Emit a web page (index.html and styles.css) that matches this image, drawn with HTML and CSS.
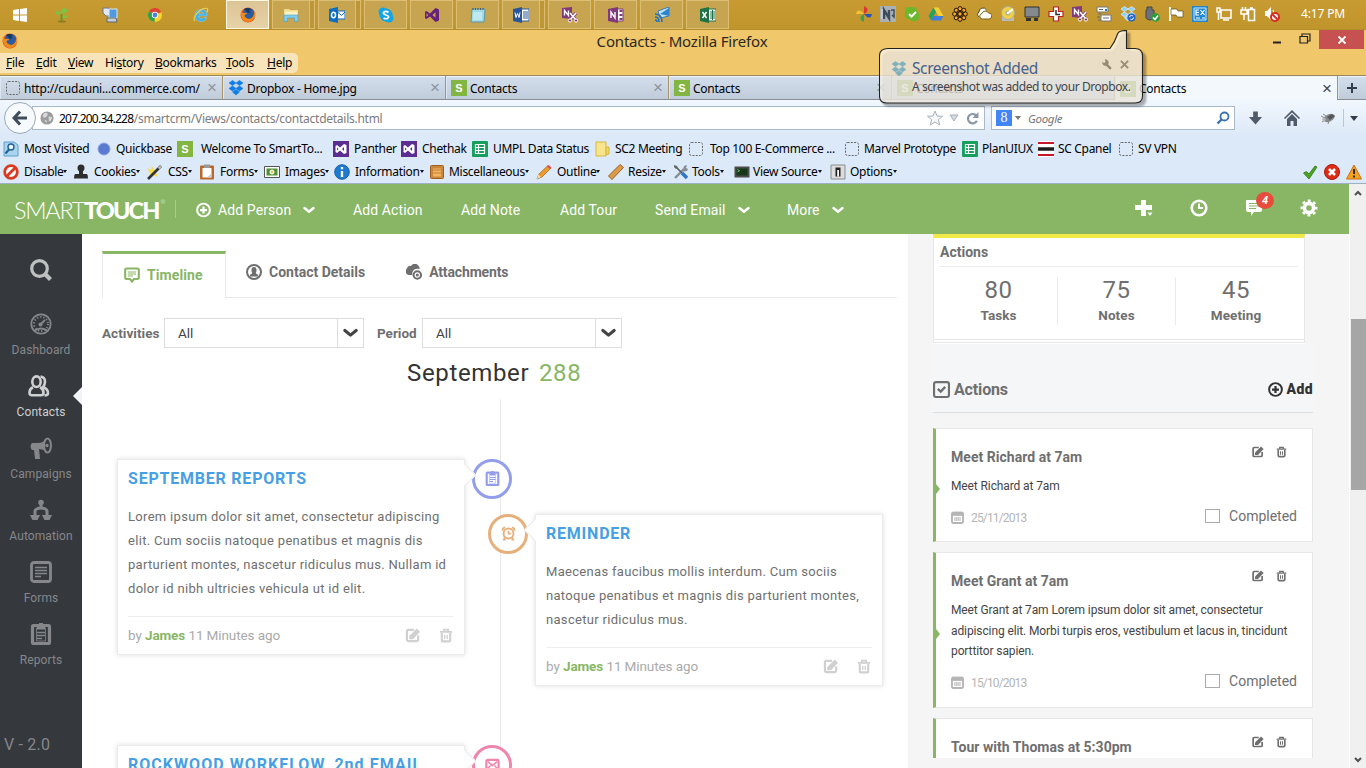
FILE: index.html
```
<!DOCTYPE html>
<html lang="en">
<head>
<meta charset="utf-8">
<title>Contacts - Mozilla Firefox</title>
<link rel="stylesheet" href="styles.css">
</head>
<body>
<svg class="sprite" aria-hidden="true">
<defs>
<symbol id="firefox" viewBox="0 0 16 16"><circle cx="8" cy="8" r="7.500" fill="#d9531e"/><circle cx="8.500" cy="6.500" r="5.500" fill="#2b5c9e"/><path d="M4 2q3-2 7 0l-2 2 2 1-3 1z" fill="#16395f"/><path d="M1 3Q0 9 3 13q5 4 10 0 3-4 1.500-8-1 6-5 7-5-1-5-4 1-1 3-1Q6 5 3 6 1 5 1 3z" fill="#f08a1d"/><path d="M14 4q2 4 0 8 2-2 1.500-5z" fill="#f8d24a"/></symbol>
<symbol id="win" viewBox="0 0 16 16"><path fill="#fff" d="M1 3l6-.9v5.400H1zM8 2l7-1v6.500H8zM1 8.500h6v5.400L1 13zM8 8.500h7V15l-7-1z"/></symbol>
<symbol id="plant" viewBox="0 0 16 16"><ellipse cx="8" cy="14.500" rx="4" ry="1" fill="#8a7a20"/><path d="M7.500 14q0-4 0-7" stroke="#5b9a2a" stroke-width="1.800" fill="none"/><path d="M7 7Q3 9 1 6q0-3 4-2 0 0 2 3zM7 6Q7 1 11 1q3 1 2 4-3 3-6 1zM8 10q4 3 6-1-3-2-6 1z" fill="#7fc241"/></symbol>
<symbol id="pcs" viewBox="0 0 16 16"><path d="M1 1h6l2 4-2 4H4L1 6z" fill="#dfe8f2" stroke="#6a7890"/><path d="M7 2h8v9H7z" fill="#4f9be0" stroke="#dfe6ee"/><path d="M5 11h9l1 4H5z" fill="#c9ced6" stroke="#5d6675"/></symbol>
<symbol id="chrome" viewBox="0 0 16 16"><circle cx="8" cy="8" r="7" fill="#fbd22a"/><path d="M8 8L2 4.300A7 7 0 0 1 14.300 5z" fill="#dd4436"/><path d="M8 8L2 4.300A7 7 0 0 0 7.500 15z" fill="#2ea04e"/><circle cx="8" cy="8" r="3.200" fill="#fff"/><circle cx="8" cy="8" r="2.400" fill="#4a82dd"/></symbol>
<symbol id="ie" viewBox="0 0 16 16"><path d="M14 9H5.500q.5 2.700 3 2.700 1.500 0 2.200-1.200h3q-1.500 4.200-5.500 4.200Q2 14 2 8.500t6.200-6.200Q14 2.500 14 9zM5.600 7h5q-.3-2.200-2.500-2.200T5.600 7z" fill="#3fb2ef" stroke="#8fd3f5" stroke-width=".5"/><path d="M14 1.500q-3-1-7 2T1.500 10q-1 3 .5 4M14 1.500q1.500.5 0 4" stroke="#e9cf58" stroke-width="1.200" fill="none"/></symbol>
<symbol id="folder" viewBox="0 0 16 16"><path d="M1 2h5l1 1h8v6H1z" fill="#f2dc8b"/><path d="M2 4.500h12V8H2z" fill="#fff4c2"/><path d="M1 8h14v6.500h-3.500V11h-7v3.500H1z" fill="#83cdec" stroke="#4d9cc4" stroke-width=".6"/></symbol>
<symbol id="outlook" viewBox="0 0 16 16"><path d="M8 4h8v8H8z" fill="#fff" stroke="#0a6ec4"/><path d="M8 4.500l4.500 4L16 5" stroke="#0a6ec4" fill="none"/><path d="M0 2l9-2v16l-9-2z" fill="#0a6ec4"/><ellipse cx="4.500" cy="8" rx="2" ry="2.700" stroke="#fff" stroke-width="1.500" fill="none"/></symbol>
<symbol id="skype" viewBox="0 0 16 16"><circle cx="5" cy="5" r="4.500" fill="#12a5e6"/><circle cx="11" cy="11" r="4.500" fill="#12a5e6"/><circle cx="8" cy="8" r="6.500" fill="#12a5e6"/><path d="M10.500 5.500Q8 3.500 6 5t2 3 2 3-4.500 0" stroke="#fff" stroke-width="1.700" fill="none"/></symbol>
<symbol id="vs" viewBox="0 0 16 16"><path d="M11.500 1L15 2.500v11L11.500 15 6 9.500 2.500 12 1 11.200V4.800L2.500 4 6 6.500zM11.500 5.300L8.500 8l3 2.700zM2.500 6.200v3.600L4.300 8z" fill="#68217a"/></symbol>
<symbol id="vsbox" viewBox="0 0 16 16"><path d="M0 0h16v16H0z" fill="#5c2d91"/><path d="M11 3l2.500 1v8L11 13 7 9.500 4 12l-1.500-1V5L4 4l3 2.500zM11 6L9 8l2 2zM4 6.500v3L5.600 8z" fill="#fff"/></symbol>
<symbol id="notepad" viewBox="0 0 16 16"><path d="M2 2h13l-1 13H1z" fill="#9fdbe6" stroke="#5e97a6"/><path d="M3 1v2M5.500 1v2M8 1v2M10.500 1v2M13 1v2" stroke="#556"/><path d="M3 6h9M3 8h9M3 10h9M3 12h9" stroke="#dff5fa"/></symbol>
<symbol id="word" viewBox="0 0 16 16"><path d="M8 2h8v12H8z" fill="#fff" stroke="#2a5699"/><path d="M10 5h5M10 7h5M10 9h5M10 11h5" stroke="#2a5699"/><path d="M0 2l9-2v16l-9-2z" fill="#2a5699"/><path d="M2 5.500l1 5 1.500-4 1.500 4 1-5" stroke="#fff" fill="none"/></symbol>
<symbol id="clip" viewBox="0 0 16 16"><path d="M0 1l10-1v12l-10-1z" fill="#80397b"/><path d="M2.500 8.500V3.500l4 5v-5" stroke="#fff" stroke-width="1.400" fill="none"/><path d="M8 6l6 7M14 6l-6 7" stroke="#80397b" stroke-width="3"/><path d="M8 6l6 7M14 6l-6 7" stroke="#fff" stroke-width="1.600"/><circle cx="8" cy="13.500" r="1.600" fill="#80397b" stroke="#fff"/><circle cx="14" cy="13.500" r="1.600" fill="#80397b" stroke="#fff"/></symbol>
<symbol id="onenote" viewBox="0 0 16 16"><path d="M8 2h7v12H8z" fill="#fff" stroke="#80397b"/><path d="M13 3v2M13 7v2M13 11v2" stroke="#80397b" stroke-width="3"/><path d="M0 2l10-2v16l-10-2z" fill="#80397b"/><path d="M3 11V5l4 6V5" stroke="#fff" stroke-width="1.400" fill="none"/></symbol>
<symbol id="dish" viewBox="0 0 16 16"><path d="M4 4l11-4v9L6 11z" fill="#c6e5f7" stroke="#3b7cb2"/><path d="M6 7l9-6v8z" fill="#2d86d0"/><path d="M1 7q7 0 7 8M1 10q4 0 4 5M1 13q2 0 2 2" stroke="#2474bd" stroke-width="1.700" fill="none"/></symbol>
<symbol id="excel" viewBox="0 0 16 16"><path d="M8 2h8v12H8z" fill="#fff" stroke="#1f7245"/><path d="M10 5h5M10 7h5M10 9h5M10 11h5M12.500 3v10" stroke="#1f7245"/><path d="M0 2l9-2v16l-9-2z" fill="#1f7245"/><path d="M2.500 5l4 6M6.500 5l-4 6" stroke="#fff" stroke-width="1.500"/></symbol>
<symbol id="pinwheel" viewBox="0 0 16 16"><path d="M8 8V0q5 2 3 6z" fill="#da3b32"/><path d="M8 8h8q-1 5-5 3z" fill="#2f54b8"/><path d="M8 8v8q-5-2-3-6z" fill="#35a34d"/><path d="M8 8H0q1-5 5-3z" fill="#f1c232"/></symbol>
<symbol id="nbox" viewBox="0 0 16 16"><path d="M0 0h16v16H0z" fill="#aab0b5"/><path d="M4 13V4l5 8V4" stroke="#3e4c5c" stroke-width="2.400" fill="none"/><path d="M11 4h3v7l-2-2" stroke="#3e4c5c" stroke-width="1.500" fill="none"/><path d="M2 13V3" stroke="#e7eaee"/></symbol>
<symbol id="lync" viewBox="0 0 16 16"><rect x="1" y="1" width="12" height="12" rx="4" fill="#6bb82d"/><rect x="5" y="5" width="10" height="10" rx="4" fill="#6bb82d"/><path d="M5 8l2.500 2.500L12 6" stroke="#fff" stroke-width="2" fill="none"/></symbol>
<symbol id="drive" viewBox="0 0 16 16"><path d="M5.500 1.500h5l5 8.500h-5z" fill="#f8cf38"/><path d="M5.500 1.500L8 6 3 14.500.5 10z" fill="#2aa25f"/><path d="M5.500 10h10L13 14.500H3z" fill="#3f7de0"/></symbol>
<symbol id="flower" viewBox="0 0 16 16"><g fill="#f6a623" stroke="#1e1608"><circle cx="8" cy="2.700" r="2.100"/><circle cx="8" cy="13.300" r="2.100"/><circle cx="2.700" cy="8" r="2.100"/><circle cx="13.300" cy="8" r="2.100"/><circle cx="4.200" cy="4.200" r="2"/><circle cx="11.800" cy="4.200" r="2"/><circle cx="4.200" cy="11.800" r="2"/><circle cx="11.800" cy="11.800" r="2"/></g><circle cx="8" cy="8" r="3" fill="#201808"/><circle cx="8" cy="8" r="1.700" fill="#f6a623"/></symbol>
<symbol id="cloud" viewBox="0 0 16 16"><path d="M3 11a3 3 0 0 1 0-5 4 4 0 0 1 7.500-2" fill="#fff" stroke="#5a4a18"/><path d="M6 13a2.800 2.800 0 0 1 0-5.500A3.500 3.500 0 0 1 12.500 7 3 3 0 0 1 13 13z" fill="#fff" stroke="#7a651c"/></symbol>
<symbol id="disc" viewBox="0 0 16 16"><path d="M2 10h12v5H2z" fill="#b8bcc1"/><circle cx="8" cy="7" r="6.500" fill="#f0d247" stroke="#aaa"/><circle cx="8" cy="7" r="2" fill="#fff" stroke="#999"/><path d="M8 7l5-4" stroke="#fff" stroke-width="2"/></symbol>
<symbol id="screen" viewBox="0 0 16 16"><path d="M1 1h14v10H1z" fill="#85898e" stroke="#333"/><path d="M2 12h5v3H2zM10 12h4v3h-4z" fill="#333"/></symbol>
<symbol id="redcross" viewBox="0 0 16 16"><path d="M5.500 1h5v4.500H15v5h-4.500V15h-5v-4.500H1v-5h4.500z" fill="#fff" stroke="#b82222" stroke-width="1.200"/><path d="M8 4v4.500h4" stroke="#333" stroke-width="1.500" fill="none"/></symbol>
<symbol id="cards" viewBox="0 0 16 16"><path d="M1 1h11v5H1zM5 9h10v6H5z" fill="#fff" stroke="#777"/><path d="M2 8h3M1 11h3M2 14h3M7 12h6M3 3.500h4" stroke="#667"/><path d="M9 3h2v2H9z" fill="#27b"/></symbol>
<symbol id="dropbox" viewBox="0 0 16 16"><path d="M4.500.5L8 3 4.500 5.500 1 3zM11.500.5L15 3l-3.500 2.500L8 3zM4.500 5.900L8 8.400l-3.500 2.500L1 8.400zM11.500 5.900L15 8.400l-3.500 2.500L8 8.400zM4.500 12L8 9.500l3.500 2.500L8 15z" fill="currentColor" stroke="currentColor" stroke-width=".6"/></symbol>
<symbol id="dropsync" viewBox="0 0 16 16"><path d="M4.500.5L8 3 4.500 5.500 1 3zM11.500.5L15 3l-3.500 2.500L8 3zM4.500 5.900L8 8.400l-3.500 2.500L1 8.400zM11.500 5.900L15 8.400l-3.500 2.500L8 8.400zM4.500 12L8 9.500l3.500 2.500L8 15z" fill="#8fd0f6" stroke="#d8effb" stroke-width=".8"/><circle cx="11.500" cy="11.500" r="4" fill="#2667c9"/><circle cx="11.500" cy="11.500" r="2" fill="none" stroke="#fff" stroke-dasharray="4 2"/></symbol>
<symbol id="usb" viewBox="0 0 16 16"><path d="M3 1h5v3h2v8q-4 4-8 0V4h1z" fill="#6c7177" stroke="#43474b"/><circle cx="11.500" cy="11.500" r="4.300" fill="#2d9b3a"/><path d="M9 11.500l2 2 3-4" stroke="#fff" stroke-width="1.500" fill="none"/></symbol>
<symbol id="flag" viewBox="0 0 16 16"><path d="M2 1v14" stroke="#fff" stroke-width="2"/><path d="M3 3h6l1 2h5v6H9L8 9H3z" fill="#fff" stroke="#5c4a12" stroke-width=".7"/></symbol>
<symbol id="ex" viewBox="0 0 16 16"><path d="M0 0h16v16H0z" fill="#1f87cf"/><path d="M2 2h12v12H2z" fill="none" stroke="#fff" stroke-width=".8"/><path d="M7 4H4v5h3M4 6.500h3M8.500 4l4 5M12.500 4l-4 5M4 12h4M10 12h3" stroke="#fff" stroke-width="1.200" fill="none"/></symbol>
<symbol id="net" viewBox="0 0 16 16"><path d="M5 4h10v8H5zM7 14h6M1 2h3v4H1zM2.500 6v8" fill="none" stroke="#fff" stroke-width="1.500"/></symbol>
<symbol id="batt" viewBox="0 0 16 16"><path d="M8.500 3.500h6v11h-6zM10 2h3M1 4h6v4H1zM2.500 1v3M5.500 1v3M4 8v6" fill="none" stroke="#fff" stroke-width="1.500"/></symbol>
<symbol id="mute" viewBox="0 0 16 16"><path d="M1 5h2l4-4v13l-4-4H1z" fill="#fff"/><path d="M9 4q2 3 0 7" stroke="#fff" fill="none"/><circle cx="11" cy="11" r="4" fill="#fff" stroke="#d82b22" stroke-width="2"/><path d="M8.500 8.500l5 5" stroke="#d82b22" stroke-width="2"/></symbol>
<symbol id="dash" viewBox="0 0 16 16"><rect x="1.500" y="1.500" width="13" height="13" rx="2" fill="none" stroke="#666" stroke-dasharray="2 1.300"/></symbol>
<symbol id="magblue" viewBox="0 0 16 16"><path d="M1 1h10l4 3v11H1z" fill="#a9d4ee" stroke="#5da0cf"/><circle cx="8" cy="6" r="3" fill="#eaf6fd" stroke="#245f93" stroke-width="1.400"/><path d="M6 8.500l-3.500 4" stroke="#245f93" stroke-width="2"/></symbol>
<symbol id="ball" viewBox="0 0 16 16"><circle cx="8" cy="8" r="6" fill="#5a7ad0" stroke="#8aa4e8"/></symbol>
<symbol id="sheet" viewBox="0 0 16 16"><rect width="16" height="16" rx="1" fill="#17a05d"/><path d="M3.500 3.500h9v9h-9zM3.500 6.500h9M3.500 9.500h9M6.500 3.500v9" fill="none" stroke="#fff" stroke-width="1.200"/></symbol>
<symbol id="yfold" viewBox="0 0 16 16"><path d="M2 1h10v14H2z" fill="#f7e48d" stroke="#d9b93c"/><path d="M12 6h3v7l-3 1z" fill="#eed26a" stroke="#d9b93c"/></symbol>
<symbol id="cpanel" viewBox="0 0 16 16"><path d="M0 0h16v16H0z" fill="#fff"/><path d="M0 2h16M0 14h16" stroke="#c41a2b" stroke-width="2"/><path d="M0 8h16" stroke="#1d1d1d" stroke-width="3.500"/></symbol>
<symbol id="no" viewBox="0 0 16 16"><circle cx="8" cy="8" r="6.300" fill="#fff" stroke="#dc3a20" stroke-width="2.800"/><path d="M4 12l8-8" stroke="#dc3a20" stroke-width="2.800"/></symbol>
<symbol id="stamp" viewBox="0 0 16 16"><circle cx="8" cy="4" r="3.500" fill="#2e2e2e"/><path d="M6 6h4v4h4q1 1 1 4.500H1Q1 11 2 10h4z" fill="#2e2e2e"/></symbol>
<symbol id="wand" viewBox="0 0 16 16"><path d="M0 4l4 2 1-4 2 4 5-1-3 4 2 4-5-2-4 3 1-5z" fill="#f7d94c"/><path d="M1 15L14 2" stroke="#333" stroke-width="2.600"/><path d="M11.500 4.500L14 2" stroke="#bbb" stroke-width="2.400"/></symbol>
<symbol id="pad" viewBox="0 0 16 16"><rect x="1" y="1.500" width="14" height="14" rx="1" fill="#b9682a"/><path d="M3.500 4h9v9.500h-9z" fill="#fff"/><path d="M5 .5h6v3.500H5z" fill="#999"/><path d="M8 13.500l4.500-4v4z" fill="#ccc"/></symbol>
<symbol id="image" viewBox="0 0 16 16"><path d="M.5 2.500h15v11H.5z" fill="#fff" stroke="#555"/><path d="M2.500 4.500h11v7h-11z" fill="#4f8f35"/><circle cx="8" cy="8" r="2.500" fill="#e9eee0"/><circle cx="8" cy="8" r="1" fill="#e8c324"/></symbol>
<symbol id="info" viewBox="0 0 16 16"><circle cx="8" cy="8" r="7.300" fill="#1d7bd0" stroke="#1a5fa0"/><path d="M8 7v6M8 3v2.300" stroke="#fff" stroke-width="2.300"/></symbol>
<symbol id="box" viewBox="0 0 16 16"><rect x="1.500" y="1.500" width="13" height="13" rx="1" fill="#c9873c" stroke="#a35d1c"/><path d="M4 4.500h8v8H4z" fill="#efb561"/><path d="M4 6h8M4 9h8" stroke="#a35d1c" stroke-width=".6"/></symbol>
<symbol id="pencil" viewBox="0 0 16 16"><path d="M1 15l2-5L12 1.500l3 2.500L6 13z" fill="#f09a2b" stroke="#9c5d17" stroke-width=".7"/><path d="M1 15l1.500-4.500L5 13z" fill="#f3ddb4"/><path d="M11 2.500l1.500-1.500L15.500 3.500 14 5z" fill="#d94a59"/></symbol>
<symbol id="ruler" viewBox="0 0 16 16"><path d="M.5 12L12 .5l3.500 3L4 15.500z" fill="#dd9a4a" stroke="#9a6326"/></symbol>
<symbol id="tools" viewBox="0 0 16 16"><path d="M2 14l9-9" stroke="#868c94" stroke-width="2.400"/><path d="M10 6l1-4 3-1-1 3 2 1-1 2-3 .5z" fill="#868c94"/><path d="M3 3l6 6" stroke="#555c66" stroke-width="1.600"/><path d="M1 1l3 1 1 2-2 1-2-2z" fill="#666"/><path d="M9 9l5 5" stroke="#2f75c8" stroke-width="3.500"/></symbol>
<symbol id="term" viewBox="0 0 16 16"><rect x=".5" y="2.500" width="15" height="11" rx="1" fill="#4a4d50" stroke="#999"/><path d="M2.500 4.500h11v7h-11z" fill="#173818"/><path d="M3.500 5.500l2 1.200-2 1.200" stroke="#6fc76f" fill="none"/></symbol>
<symbol id="opt" viewBox="0 0 16 16"><path d="M1 1h14v14H1z" fill="#dcdcdc" stroke="#8b8b8b"/><path d="M5.500 3.500h5v9h-5z" fill="#222"/><path d="M7.200 6h1.800v6.500H7.200z" fill="#fff"/></symbol>
<symbol id="check" viewBox="0 0 16 16"><path d="M1.500 9l3-1.500L7 10l6-8 2 1-8 12z" fill="#4ca522" stroke="#2d7310" stroke-width=".8"/></symbol>
<symbol id="err" viewBox="0 0 16 16"><circle cx="8" cy="8" r="7.500" fill="#de2b17" stroke="#ad1a0c"/><path d="M5 5l6 6M11 5l-6 6" stroke="#fff" stroke-width="2.500"/></symbol>
<symbol id="warn" viewBox="0 0 16 16"><path d="M8 1l7.500 14H.5z" fill="#f6a21d" stroke="#c9700c"/><path d="M8 5v5M8 11.500v2" stroke="#222" stroke-width="1.900"/></symbol>
<symbol id="magx" viewBox="0 0 22 22"><circle cx="9.500" cy="9.500" r="7.800" fill="none" stroke="currentColor" stroke-width="3.200"/><path d="M15 15l5.500 5.500" stroke="currentColor" stroke-width="4.200"/></symbol>
<symbol id="gauge" viewBox="0 0 22 22"><circle cx="11" cy="11" r="9.700" fill="none" stroke="currentColor" stroke-width="1.800"/><circle cx="11" cy="11" r="7" fill="none" stroke="currentColor" stroke-width="2" stroke-dasharray="1.200 2"/><path d="M10 12l5-5M4 18q7-5 14 0" stroke="currentColor" stroke-width="1.800" fill="none"/><circle cx="10.500" cy="11.500" r="2" fill="currentColor"/></symbol>
<symbol id="people" viewBox="0 0 22 22"><g fill="none" stroke="currentColor" stroke-width="2.600"><ellipse cx="8.500" cy="6.700" rx="4.200" ry="5.300"/><path d="M5 12.300q-3.500 1.500-3.500 5.500 0 2.500 2.500 2.500h9q2.500 0 2.500-2.500 0-4-3.500-5.500M12.500 1.500q4.500.5 4.500 5.200 0 3-2 5.300 5 2 5 6 0 2.500-3.500 2.500"/></g></symbol>
<symbol id="horn" viewBox="0 0 22 22"><path d="M2 6h6q5 0 9-4.500v13.500q-4-3-8-3L10 22H5l-1-9H2Q-1 9.500 2 6z" fill="currentColor"/><ellipse cx="17.500" cy="8.500" rx="3.500" ry="7" fill="#35383d" stroke="currentColor" stroke-width="2"/><circle cx="17" cy="8.500" r="1.700" fill="currentColor"/></symbol>
<symbol id="tree" viewBox="0 0 22 22"><path d="M11 3v6M11 9q-5 0-6 3v5M11 9q5 0 6 3v5" fill="none" stroke="currentColor" stroke-width="3"/><circle cx="11" cy="3.500" r="2.800" fill="currentColor"/><path d="M0 16h10l-2.500 5h-5zM12 16h10l-2.500 5h-5z" fill="currentColor"/></symbol>
<symbol id="form" viewBox="0 0 22 22"><rect x="1.500" y="1.500" width="19" height="19" rx="2.500" fill="none" stroke="currentColor" stroke-width="2.800"/><path d="M5 6.500h12M5 9.500h12M5 12.500h12M5 15.500h6" stroke="currentColor" stroke-width="1.600"/></symbol>
<symbol id="report" viewBox="0 0 22 22"><rect x="2.500" y="2.500" width="17" height="18" rx="1" fill="none" stroke="currentColor" stroke-width="3.200"/><path d="M6.500 5h9v13h-9z" fill="none" stroke="currentColor" stroke-width=".8"/><path d="M7 3h8v3.500H7zM9 0h4v3H9z" fill="currentColor"/><path d="M7 9.500h8M7 12.500h8M7 15.500h5" stroke="currentColor" stroke-width="1.600"/></symbol>
<symbol id="edit" viewBox="0 0 16 16"><path d="M9 2H3Q1.500 2 1.500 3.500v9Q1.500 14 3 14h9q1.500 0 1.500-1.500V8" fill="none" stroke="currentColor" stroke-width="2.300"/><path d="M4 8.500L12 .500l3.500 3.500L8 12H4z" fill="currentColor"/></symbol>
<symbol id="trash" viewBox="0 0 16 16"><path d="M1 3.900h14M5.500 3.500V1.300h5v2.200" fill="none" stroke="currentColor" stroke-width="2"/><path d="M3.200 5v8q0 1.700 1.700 1.700h6.200q1.700 0 1.700-1.700V5" fill="none" stroke="currentColor" stroke-width="2.400"/><path d="M6.600 7v5M9.400 7v5" stroke="currentColor" stroke-width="1.500"/></symbol>
<symbol id="plusc" viewBox="0 0 16 16"><circle cx="8" cy="8" r="6.800" fill="none" stroke="currentColor" stroke-width="2.100"/><path d="M8 4.300v7.400M4.300 8h7.400" stroke="currentColor" stroke-width="2.400"/></symbol>
<symbol id="chev" viewBox="0 0 12 8"><path d="M1.500 2L6 5.700 10.500 2" fill="none" stroke="currentColor" stroke-width="2.500" stroke-linecap="round" stroke-linejoin="round"/></symbol>
<symbol id="plus" viewBox="0 0 18 18"><path d="M6 1h5v5h6v5h-6v6H6v-6H0V6h6z" fill="currentColor"/><path d="M12.500 13.500h5L15 17z" fill="currentColor"/></symbol>
<symbol id="clock" viewBox="0 0 18 18"><circle cx="9" cy="9" r="7.300" fill="none" stroke="currentColor" stroke-width="2.600"/><path d="M9 4.500V9h4" fill="none" stroke="currentColor" stroke-width="2"/></symbol>
<symbol id="chat" viewBox="0 0 18 18"><path d="M2 1h14q1 0 1 1v9q0 2-2 2H9l-3 4v-4H3q-2 0-2-2V2q0-1 1-1z" fill="currentColor"/><path d="M4 4.500h10M4 7h10M4 9.500h7" stroke="#88b664" stroke-width="1.100"/></symbol>
<symbol id="gear" viewBox="0 0 18 18"><circle cx="9" cy="9" r="4.600" fill="none" stroke="currentColor" stroke-width="3.600"/><circle cx="9" cy="9" r="7.300" fill="none" stroke="currentColor" stroke-width="2.400" stroke-dasharray="2.900 2.830" stroke-dashoffset="1.450"/></symbol>
<symbol id="note" viewBox="0 0 16 16"><path d="M2.500 1.500h11q1.300 0 1.300 1.300v7.900q0 1.300-1.300 1.300H10l-2 2.500L6 12H2.500q-1.300 0-1.300-1.300V2.800q0-1.300 1.300-1.300z" fill="none" stroke="currentColor" stroke-width="2.100"/><path d="M4 5h8M4 7h8M4 9h5" stroke="currentColor" stroke-width="1.100"/></symbol>
<symbol id="user" viewBox="0 0 16 16"><circle cx="8" cy="8" r="7" fill="none" stroke="currentColor" stroke-width="2"/><ellipse cx="8" cy="6.300" rx="2.500" ry="3.200" fill="currentColor"/><path d="M6.500 8h3l.5 1.500q2.300.5 2.300 3H3.700q0-2.500 2.300-3z" fill="currentColor"/></symbol>
<symbol id="attach" viewBox="0 0 16 16"><path d="M2.500 11A3.700 3.700 0 0 1 1 4.500 3 3 0 0 1 5 2 4.500 4.500 0 0 1 13 2.500 3 3 0 0 1 13.500 5Q8 4 6.500 8 6 10 6.500 11z" fill="currentColor"/><circle cx="11.300" cy="11" r="3.700" fill="none" stroke="currentColor" stroke-width="2.100"/><circle cx="11.300" cy="11" r="1.500" fill="currentColor"/></symbol>
<symbol id="alarm" viewBox="0 0 16 16"><circle cx="8" cy="8" r="5.300" fill="none" stroke="currentColor" stroke-width="2"/><path d="M8 5v3.200h2.500M1.500 5q0-3 3-3.500M14.500 5q0-3-3-3.500M4 12l-1 2.500h2M12 12l1 2.500h-2" fill="none" stroke="currentColor" stroke-width="1.800"/></symbol>
<symbol id="mail" viewBox="0 0 16 16"><rect x="1.500" y="3" width="13" height="10.500" rx="1.500" fill="none" stroke="currentColor" stroke-width="2.300"/><path d="M3 5l5 4 5-4M3 12l3-3M13 12l-3-3" fill="none" stroke="currentColor" stroke-width="1.600"/></symbol>
<symbol id="cal" viewBox="0 0 16 16"><rect x="1.200" y="2.200" width="13.600" height="12.600" rx="1.500" fill="none" stroke="currentColor" stroke-width="2.300"/><path d="M1 1h14v5H1z" fill="currentColor"/><path d="M4 8.500h8M4 11h8" stroke="currentColor" stroke-width="1.800" stroke-dasharray="1.600 .5"/></symbol>
<symbol id="boxcheck" viewBox="0 0 16 16"><rect x="1" y="1" width="14" height="14" rx="1.800" fill="none" stroke="currentColor" stroke-width="2"/><path d="M4.500 7.500L7.300 10 11.500 5.500" fill="none" stroke="currentColor" stroke-width="2.200"/></symbol>
<symbol id="bug" viewBox="0 0 16 16"><ellipse cx="9" cy="8" rx="6" ry="3.600" transform="rotate(-25 9 8)" fill="#85888a"/><path d="M7 7l5-3 3 2-5 4z" fill="#55585b"/><path d="M1 6l4 2M2 12l3-2M8 14l1-3M3 4l3 2" stroke="#8a8a8a"/><circle cx="4" cy="9.500" r="1.800" fill="#b5b7b9"/></symbol>
<symbol id="home" viewBox="0 0 16 16"><path d="M8 0l8 8-1 1-7-6.500L1 9 0 8z" fill="#4f5b69"/><path d="M8 4l5 5v7H9.500v-5h-3v5H3V9z" fill="#4f5b69"/></symbol>
<symbol id="down" viewBox="0 0 16 16"><path d="M5.500 1h5v6H15l-7 8-7-8h4.500z" fill="#4f5b69"/></symbol>
<symbol id="globe" viewBox="0 0 16 16"><circle cx="8" cy="8" r="7.500" fill="#9b9b9b"/><path d="M4 3q3-2 5 0l-1 3-3 2-2-2zM10 6l4 1-2 5-2-1zM5 10l3 1-1 3z" fill="#d9d9d9"/></symbol>
</defs>
</svg>

<div class="desktop">
  <div class="taskbar">
    <div class="pins">
      <svg><use href="#win"/></svg><svg><use href="#plant"/></svg><svg><use href="#pcs"/></svg><svg><use href="#chrome"/></svg><svg><use href="#ie"/></svg>
    </div>
    <div class="tasks">
      <span class="task on"><svg><use href="#firefox"/></svg></span>
      <span class="task multi"><svg><use href="#folder"/></svg></span>
      <span class="task multi"><svg><use href="#outlook"/></svg></span>
      <span class="task"><svg><use href="#skype"/></svg></span>
      <span class="task"><svg><use href="#vs"/></svg></span>
      <span class="task"><svg><use href="#notepad"/></svg></span>
      <span class="task multi"><svg><use href="#word"/></svg></span>
      <span class="task"><svg><use href="#clip"/></svg></span>
      <span class="task"><svg><use href="#onenote"/></svg></span>
      <span class="task"><svg><use href="#dish"/></svg></span>
      <span class="task"><svg><use href="#excel"/></svg></span>
    </div>
    <div class="tray">
      <svg><use href="#pinwheel"/></svg><svg><use href="#nbox"/></svg><svg><use href="#lync"/></svg><svg><use href="#drive"/></svg><svg><use href="#flower"/></svg><svg><use href="#cloud"/></svg><svg><use href="#disc"/></svg><svg><use href="#screen"/></svg><svg><use href="#redcross"/></svg><svg><use href="#clip"/></svg><svg><use href="#cards"/></svg><svg><use href="#dropsync"/></svg><svg><use href="#usb"/></svg><svg><use href="#flag"/></svg><svg><use href="#ex"/></svg><svg><use href="#net"/></svg><svg><use href="#batt"/></svg><svg><use href="#mute"/></svg>
    </div>
    <span class="time">4:17 PM</span>
  </div>

  <div class="titlebar">
    <svg class="i16"><use href="#firefox"/></svg>
    <span class="wintitle">Contacts - Mozilla Firefox</span>
    <div class="winbtns">
      <svg class="wmin" viewBox="0 0 10 12"><path d="M1 9.500h8" stroke="#222" stroke-width="2"/></svg>
      <svg class="wmax" viewBox="0 0 12 12"><path d="M1 3.500h7.500V10H1zM3 3V1h8v7H9" fill="none" stroke="#222" stroke-width="1.200"/></svg>
      <span class="wclose"><svg viewBox="0 0 10 10"><path d="M1.500 1.500l7 7M8.500 1.500l-7 7" stroke="#fff" stroke-width="1.800"/></svg></span>
    </div>
  </div>

  <div class="menubar"><div class="menus">
    <span><u>F</u>ile</span><span><u>E</u>dit</span><span><u>V</u>iew</span><span>Hi<u>s</u>tory</span><span><u>B</u>ookmarks</span><span><u>T</u>ools</span><span><u>H</u>elp</span>
  </div></div>

  <div class="tabs">
    <div class="tab"><svg class="i16"><use href="#dash"/></svg><span class="t-url">http://cudauni...commerce.com/</span><b>×</b></div>
    <div class="tab"><svg class="i16 dblue"><use href="#dropbox"/></svg><span>Dropbox - Home.jpg</span><b>×</b></div>
    <div class="tab"><i class="s">S</i><span>Contacts</span><b>×</b></div>
    <div class="tab"><i class="s">S</i><span>Contacts</span><b>×</b></div>
    <div class="tab"><i class="s">S</i><span>Contacts</span><b></b></div>
    <div class="tab active"><i class="s">S</i><span>Contacts</span><b>×</b></div>
    <div class="tab newtab"><svg class="i12" viewBox="0 0 12 12"><path d="M6 1v10M1 6h10" stroke="#333c48" stroke-width="2"/></svg></div>
  </div>

  <div class="navbar">
    <span class="back"><svg viewBox="0 0 16 16"><path d="M8 1.500L2 8l6 6.500M2.500 8H15" fill="none" stroke="#414c5a" stroke-width="3"/></svg></span>
    <div class="url"><svg class="i14"><use href="#globe"/></svg><span class="addr"><em>207.200.34.228</em>/smartcrm/Views/contacts/contactdetails.html</span>
      <svg class="star" viewBox="0 0 16 16"><path d="M8 1l2 5 5.500.3-4.200 3.400 1.500 5.300L8 12l-4.800 3 1.500-5.300L.5 6.300 6 6z" fill="#f6f7f8" stroke="#a9b1bb"/></svg>
      <svg class="drop" viewBox="0 0 10 8"><path d="M1 1h8L5 7z" fill="#d3d9e0" stroke="#a9b1bb"/></svg>
      <svg class="reload" viewBox="0 0 12 12"><path d="M9.500 3.500A4.300 4.300 0 1 0 10 8" fill="none" stroke="#8a97a6" stroke-width="2"/><path d="M11.500 0v5.500H6z" fill="#8a97a6"/></svg>
    </div>
    <div class="search"><i class="g">8</i><svg class="car" viewBox="0 0 6 4"><path d="M0 0h6L3 4z" fill="#777"/></svg><em>Google</em><svg class="mag" viewBox="0 0 14 14"><circle cx="8.500" cy="5.500" r="4" fill="none" stroke="#3b73b0" stroke-width="1.800"/><path d="M5.500 8.500L1.500 12.500" stroke="#3b73b0" stroke-width="2.400"/></svg></div>
    <svg class="n1"><use href="#down"/></svg><svg class="n2"><use href="#home"/></svg><svg class="n3"><use href="#bug"/></svg>
    <span class="more"><svg viewBox="0 0 8 5"><path d="M0 0h8L4 5z" fill="#333d49"/></svg></span>
  </div>

  <div class="bar marks">
    <svg><use href="#magblue"/></svg><span>Most Visited</span>
    <svg><use href="#ball"/></svg><span>Quickbase</span>
    <i class="s">S</i><span>Welcome To SmartTo...</span>
    <svg><use href="#vsbox"/></svg><span>Panther</span>
    <svg><use href="#vsbox"/></svg><span>Chethak</span>
    <svg><use href="#sheet"/></svg><span>UMPL Data Status</span>
    <svg><use href="#yfold"/></svg><span>SC2 Meeting</span>
    <svg><use href="#dash"/></svg><span>Top 100 E-Commerce ...</span>
    <svg><use href="#dash"/></svg><span>Marvel Prototype</span>
    <svg><use href="#sheet"/></svg><span>PlanUIUX</span>
    <svg><use href="#cpanel"/></svg><span>SC Cpanel</span>
    <svg><use href="#dash"/></svg><span>SV VPN</span>
  </div>
  <div class="bar dev">
    <svg><use href="#no"/></svg><span class="dd">Disable</span>
    <svg><use href="#stamp"/></svg><span class="dd">Cookies</span>
    <svg><use href="#wand"/></svg><span class="dd">CSS</span>
    <svg><use href="#pad"/></svg><span class="dd">Forms</span>
    <svg><use href="#image"/></svg><span class="dd">Images</span>
    <svg><use href="#info"/></svg><span class="dd">Information</span>
    <svg><use href="#box"/></svg><span class="dd">Miscellaneous</span>
    <svg><use href="#pencil"/></svg><span class="dd">Outline</span>
    <svg><use href="#ruler"/></svg><span class="dd">Resize</span>
    <svg><use href="#tools"/></svg><span class="dd">Tools</span>
    <svg><use href="#term"/></svg><span class="dd">View Source</span>
    <svg><use href="#opt"/></svg><span class="dd">Options</span>
    <svg><use href="#check"/></svg><svg><use href="#err"/></svg><svg><use href="#warn"/></svg>
  </div>

  <div class="viewport">
    <div class="page">
      <div class="header">
        <div class="logo"><span>SMART</span><strong>TOUCH</strong><sup>®</sup></div>
        <div class="hnav">
          <span class="hp"><svg class="i16"><use href="#plusc"/></svg>Add Person<svg class="chev"><use href="#chev"/></svg></span>
          <span>Add Action</span><span>Add Note</span><span>Add Tour</span>
          <span>Send Email<svg class="chev"><use href="#chev"/></svg></span>
          <span>More<svg class="chev"><use href="#chev"/></svg></span>
        </div>
        <div class="hicons">
          <svg><use href="#plus"/></svg><svg><use href="#clock"/></svg>
          <span class="msg"><svg><use href="#chat"/></svg><i>4</i></span>
          <svg><use href="#gear"/></svg>
        </div>
      </div>
      <div class="body">
        <div class="side">
          <svg class="find"><use href="#magx"/></svg>
          <div class="nav"><svg><use href="#gauge"/></svg><span>Dashboard</span></div>
          <div class="nav cur"><svg><use href="#people"/></svg><span>Contacts</span></div>
          <div class="nav"><svg><use href="#horn"/></svg><span>Campaigns</span></div>
          <div class="nav"><svg><use href="#tree"/></svg><span>Automation</span></div>
          <div class="nav"><svg><use href="#form"/></svg><span>Forms</span></div>
          <div class="nav"><svg><use href="#report"/></svg><span>Reports</span></div>
          <div class="ver">V - 2.0</div>
        </div>
        <div class="main">
          <div class="ptabs">
            <div class="pt sel"><svg class="i16"><use href="#note"/></svg>Timeline</div>
            <div class="pt p2"><svg class="i16"><use href="#user"/></svg>Contact Details</div>
            <div class="pt p3"><svg class="i16"><use href="#attach"/></svg>Attachments</div>
          </div>
          <div class="filters">
            <label class="f1">Activities</label><div class="select"><span>All</span><i><svg class="chev2"><use href="#chev"/></svg></i></div>
            <label class="f2">Period</label><div class="select"><span>All</span><i><svg class="chev2"><use href="#chev"/></svg></i></div>
          </div>
          <div class="month">September <span>288</span></div>
          <div class="timeline">
            <div class="colL">
              <div class="entry">
                <div class="card l"><h3>SEPTEMBER REPORTS</h3>
                  <p>Lorem ipsum dolor sit amet, consectetur adipiscing<br>elit. Cum sociis natoque penatibus et magnis dis<br>parturient montes, nascetur ridiculus mus. Nullam id<br>dolor id nibh ultricies vehicula ut id elit.</p>
                  <div class="foot"><span>by <b>James</b> 11 Minutes ago</span><svg><use href="#edit"/></svg><svg><use href="#trash"/></svg></div>
                </div>
                <div class="dot blue"><svg><use href="#report"/></svg></div>
              </div>
              <div class="entry third">
                <div class="card l"><h3>ROCKWOOD WORKFLOW, 2nd EMAIL</h3></div>
                <div class="dot pink"><svg><use href="#mail"/></svg></div>
              </div>
            </div>
            <div class="colR">
              <div class="entry">
                <div class="dot orange"><svg><use href="#alarm"/></svg></div>
                <div class="card r"><h3>REMINDER</h3>
                  <p>Maecenas faucibus mollis interdum. Cum sociis<br>natoque penatibus et magnis dis parturient montes,<br>nascetur ridiculus mus.</p>
                  <div class="foot"><span>by <b>James</b> 11 Minutes ago</span><svg><use href="#edit"/></svg><svg><use href="#trash"/></svg></div>
                </div>
              </div>
            </div>
          </div>
        </div>
        <div class="aside">
          <div class="stats">
            <h4>Actions</h4>
            <div class="nums">
              <div><em>80</em><b>Tasks</b></div><div><em>75</em><b>Notes</b></div><div><em>45</em><b>Meeting</b></div>
            </div>
          </div>
          <div class="acthead"><svg class="bc"><use href="#boxcheck"/></svg><h2>Actions</h2><span><svg class="ac"><use href="#plusc"/></svg>Add</span></div>
          <div class="acts">
            <div class="act a1"><div class="ah"><h5>Meet Richard at 7am</h5><svg><use href="#edit"/></svg><svg><use href="#trash"/></svg></div>
              <p>Meet Richard at 7am</p>
              <div class="af"><svg><use href="#cal"/></svg><small>25/11/2013</small><i></i><span>Completed</span></div></div>
            <div class="act a2"><div class="ah"><h5>Meet Grant at 7am</h5><svg><use href="#edit"/></svg><svg><use href="#trash"/></svg></div>
              <p>Meet Grant at 7am Lorem ipsum dolor sit amet, consectetur<br>adipiscing elit. Morbi turpis eros, vestibulum et lacus in, tincidunt<br>porttitor sapien.</p>
              <div class="af"><svg><use href="#cal"/></svg><small>15/10/2013</small><i></i><span>Completed</span></div></div>
            <div class="act a3"><div class="ah"><h5>Tour with Thomas at 5:30pm</h5><svg><use href="#edit"/></svg><svg><use href="#trash"/></svg></div></div>
          </div>
        </div>
      </div>
    </div>
    <div class="scroll">
      <svg viewBox="0 0 8 6"><path d="M1 5l3-3 3 3" fill="none" stroke="#505050" stroke-width="2"/></svg>
      <div class="thumb"></div>
      <svg class="sd" viewBox="0 0 8 6"><path d="M1 1l3 3 3-3" fill="none" stroke="#505050" stroke-width="2"/></svg>
    </div>
  </div>

  <div class="balloon">
    <svg class="shape" viewBox="0 0 270 80"><path d="M9 18.500H231Q236 12 239 3Q241 .5 247.500 .5V18.500H256Q263.500 18.500 263.500 26V66Q263.500 73 256 73H8Q.5 73 .5 66V26Q.5 18.500 9 18.500Z" fill="#fffaf0" fill-opacity=".74" stroke="#222" stroke-width="1.100"/></svg>
    <div class="btxt">
      <svg class="i16"><use href="#dropbox"/></svg><strong>Screenshot Added</strong>
      <svg class="wr" viewBox="0 0 12 12"><path d="M5 5l5 5" stroke="#978b74" stroke-width="2.800" stroke-linecap="round"/><path d="M1.500 3A3.500 3.500 0 1 0 4 .500L5 3 3.500 4.500z" fill="#978b74"/></svg>
      <svg class="bx" viewBox="0 0 10 10"><path d="M1 1l8 8M9 1L1 9" stroke="#978b74" stroke-width="2"/></svg>
      <span>A screenshot was added to your Dropbox.</span>
    </div>
  </div>
</div>
</body>
</html>
```
FILE: styles.css
```
* { box-sizing: border-box; }
body { margin: 0; overflow: hidden; font-family: "Noto Sans", sans-serif; font-size: 12px; color: #000; }
h2, h3, h4, h5, p { margin: 0; }
em, i { font-style: normal; }
svg { display: block; flex: none; width: 16px; height: 16px; }
.sprite { position: absolute; width: 0; height: 0; }
.i14 { width: 14px; height: 14px; }
.i12 { width: 12px; height: 12px; }
.desktop { width: 1366px; height: 768px; display: flex; flex-direction: column; overflow: hidden; position: relative; background: #f0c76b; }

/* taskbar */
.taskbar { height: 30px; flex: none; display: flex; background: linear-gradient(#c79b31, #c0952b); border-bottom: 1px solid #b68d2b; }
.pins { width: 225px; display: grid; grid-template-columns: 42px 48px 45px 46px 46px; align-items: center; padding-left: 12px; }
.tasks { display: flex; width: 631px; gap: 3px; padding: 0 0 0 1px; }
.task { width: 43px; height: 29px; border: 1px solid #dcbd74; background: #c7a450; display: flex; align-items: center; justify-content: center; }
.task.on { background: linear-gradient(#dcc595, #e6d2a7); border: 1px solid #fff8e4; }
.task.multi { box-shadow: inset -4px 0 0 #bd9638, inset -5px 0 0 #dcbd74; padding-right: 5px; }
.tray { display: grid; grid-template-columns: repeat(18, 24px); width: 445px; align-items: center; }
.tray svg { margin-top: -1px; }
.time { color: #fff; line-height: 28px; letter-spacing: -.15px; white-space: nowrap; }

/* window frame */
.titlebar { height: 23px; flex: none; display: flex; align-items: flex-start; padding: 3px 2px 0; }
.wintitle { flex: 1; text-align: center; font-size: 15px; line-height: 17px; letter-spacing: -.18px; padding-left: 74px; color: #2b2820; }
.winbtns { display: flex; margin-top: -3px; width: 92px; align-items: flex-start; }
.wmin { width: 10px; height: 12px; margin: 3px 17px 0 0; }
.wmax { width: 12px; height: 12px; margin: 3px 8px 0 0; }
.wclose { width: 45px; height: 19px; background: #c75050; display: flex; align-items: center; justify-content: center; }
.wclose svg { width: 10px; height: 10px; }
.menubar { height: 22px; flex: none; }
.menus { width: 298px; height: 20px; border-radius: 0 5px 5px 0; background: #f8e4bb; display: grid; grid-template-columns: 30px 32px 37px 50px 71px 41px 36px; padding-left: 6px; line-height: 20px; letter-spacing: -.25px; }
.tabs { height: 25px; flex: none; display: flex; gap: 1px; background: #a99368; border-top: 1px solid #98865f; border-bottom: 1px solid #8a8d92; }
.tab { width: 222px; flex: none; display: flex; align-items: center; background: linear-gradient(#d3deec, #c0ccd9); border-left: 1px solid #dce6f1; border-top: 1px solid #eef4fa; padding-left: 4px; letter-spacing: -.25px; }
.tab span { flex: 1; padding-left: 3px; white-space: nowrap; }
.tab .t-url { letter-spacing: -.2px; }
.tab b { width: 10px; margin-right: 5px; font: 17px/20px "Liberation Sans", sans-serif; color: #8d949c; }
.tab.active { background: #f3f8fd; margin-bottom: -1px; }
.tab.active b { color: #444; }
.newtab { width: 28px; padding-left: 7px; }
.dblue { color: #0f7de8; }
.s { width: 16px; height: 16px; background: #82b541; color: #fff; font: bold 11px/16px "Liberation Sans", sans-serif; text-align: center; letter-spacing: 0; flex: none; }

/* toolbars */
.navbar { height: 36px; flex: none; display: flex; align-items: center; background: linear-gradient(#f1f7fe, #dde9f7); }
.back { width: 32px; height: 32px; margin-left: 4px; border: 1px solid #98a8ba; border-radius: 50%; background: #f6fafd; display: flex; align-items: center; justify-content: center; z-index: 1; }
.url { width: 953px; height: 24px; margin-left: -4px; border: 1px solid #a7b9cb; background: #fff; display: flex; align-items: center; padding-left: 7px; }
.addr { flex: 1; padding-left: 5px; color: #7c7c7c; letter-spacing: -.26px; }
.addr em { color: #000; letter-spacing: -.78px; margin-right: .5px; }
.star { width: 16px; margin-right: 6px; }
.drop { width: 10px; height: 8px; margin-right: 7px; }
.reload { width: 13px; height: 13px; margin-right: 5px; }
.search { width: 244px; height: 24px; margin-left: 6px; border: 1px solid #a7b9cb; background: #fff; display: flex; align-items: center; padding-left: 4px; }
.g { width: 16px; height: 16px; background: #4285f4; color: #fff; font: 14px/15px "Liberation Serif", serif; text-align: center; }
.car { width: 6px; height: 4px; margin: 0 7px 0 3px; }
.search em { font-style: italic; color: #777; flex: 1; letter-spacing: -.3px; font-size: 11.500px; }
.mag { width: 14px; height: 14px; margin-right: 4px; }
.n1 { width: 15px; margin-left: 13px; } .n2 { margin-left: 21px; } .n3 { margin-left: 20px; }
.more { border-left: 1px solid #b9c6d4; margin-left: 7px; height: 18px; display: flex; align-items: center; padding-left: 6px; }
.more svg { width: 8px; height: 5px; }
.bar { flex: none; display: grid; align-items: center; background: #dbe9f8; white-space: nowrap; letter-spacing: -.3px; }
.bar span { line-height: 16px; }
.marks { height: 25px; padding-left: 3px; grid-template-columns: 21px 72px 20px 61px 24px 132px 21px 47px 21px 50px 21px 101px 21px 73px 22px 134px 20px 98px 20px 56px 20px 60px 20px 50px; }
.marks span:nth-of-type(n+6) { letter-spacing: -.32px; }
.dev { height: 23px; padding-left: 3px; border-bottom: 1px solid #9db0c6; grid-template-columns: 21px 49px 21px 53px 21px 31px 21px 44px 21px 49px 21px 74px 20px 87px 21px 51px 20px 45px 19px 42px 19px 77px 20px 452px 22px 22px 22px; letter-spacing: -.3px; }
.dev .dd::after { content: ""; display: inline-block; border: 2.500px solid transparent; border-top: 3px solid #111; border-bottom: 0; margin-left: 0; vertical-align: 3px; }

/* application */
.viewport { flex: 1; display: flex; min-height: 0; }
.page { width: 1349px; display: flex; flex-direction: column; font-family: Roboto, sans-serif; color: #6f6f6f; }
.header { height: 50px; flex: none; display: flex; align-items: center; background: #88b664; color: #fff; }
.logo { display: flex; align-items: center; width: 176px; padding-left: 14px; font: 300 23.500px/24px Lato, sans-serif; letter-spacing: -1.300px; border-right: 1px solid #a9cc8f; height: 18px; }
.logo strong { font-weight: 900; letter-spacing: -1.900px; }
.logo sup { font-size: 6px; margin: -14px 0 0 2px; line-height: 8px; }
.logo span, .logo strong { padding-top: 2px; }
.hnav { display: grid; grid-template-columns: 157px 108px 99px 95px 132px 80px; padding-left: 20px; font-size: 14px; width: 959px; letter-spacing: .1px; padding-top: 1px; }
.hnav > span { display: flex; align-items: center; white-space: nowrap; line-height: 18px; }
.hp .i16 { margin-right: 7px; width: 15px; }
.chev { width: 12px; height: 8px; margin-left: 12px; }
.hicons { display: flex; gap: 37px; align-items: center; padding-bottom: 3px; }
.hicons svg { width: 18px; height: 18px; }
.msg { position: relative; }
.msg i { position: absolute; left: 11px; top: -7px; width: 18px; height: 17px; border-radius: 50%; background: #e74c3c; font: italic bold 11px/17px Roboto, sans-serif; text-align: center; }
.body { flex: 1; display: flex; min-height: 0; }
.side { width: 82px; background: #35383d; display: flex; flex-direction: column; align-items: center; color: #85878a; padding-top: 25px; font-size: 12px; letter-spacing: .1px; }
.side svg { width: 22px; height: 22px; }
.side .find { color: #bfc0c2; margin-bottom: 32px; }
.nav { height: 62px; width: 82px; display: flex; flex-direction: column; align-items: center; gap: 7px; position: relative; line-height: 17px; }
.nav.cur { color: #cfd0d1; }
.nav.cur svg { margin-left: -4px; }
.nav.cur::after { content: ""; position: absolute; right: 0; top: 12px; border: 9px solid transparent; border-right-color: #f1f3f5; border-left: 0; }
.ver { align-self: flex-start; margin: 50px 0 0 4px; font-size: 16px; line-height: 20px; letter-spacing: .2px; }

.main { width: 826px; background: #fff; padding-left: 20px; padding-top: 17px; overflow: hidden; }
.ptabs { width: 795px; height: 47px; border-bottom: 1px solid #e9e9e9; display: flex; font-weight: 700; font-size: 14px; letter-spacing: 0; }
.pt { display: flex; align-items: center; height: 41px; gap: 7px; white-space: nowrap; }
.pt.sel { width: 124px; height: 47px; border: 1px solid #e9e9e9; border-top: 3px solid #88b664; border-bottom: 0; background: #fff; color: #88b664; padding-left: 21px; padding-bottom: 3px; letter-spacing: .1px; }
.p2 { padding-left: 20px; } .p3 { padding-left: 41px; letter-spacing: -.15px; }
.filters { display: flex; margin-top: 20px; height: 30px; line-height: 31px; font-weight: 700; font-size: 13.500px; }
.f1 { width: 62px; letter-spacing: .05px; } .f2 { width: 45px; margin-left: 13px; }
.select { width: 200px; border: 1px solid #ddd; display: flex; justify-content: space-between; font-weight: 400; color: #444; line-height: 29px; padding-left: 13px; }
.select i { width: 26px; border-left: 1px solid #ddd; display: flex; align-items: center; justify-content: center; }
.chev2 { width: 15px; height: 10px; }
.month { margin: 10px 0 0 305px; font-size: 24px; line-height: 30px; letter-spacing: .65px; color: #333; white-space: nowrap; }
.month span { color: #88b664; margin-left: 3px; }
.timeline { position: relative; display: flex; margin-left: 15px; margin-top: 11px; padding-top: 60px; }
.timeline::before { content: ""; position: absolute; left: 383px; top: 0; width: 1px; height: 390px; background: #eaeaea; }
.entry { display: flex; gap: 7px; align-items: flex-start; position: relative; }
.entry.third { margin-top: 90px; }
.third .card { height: 120px; }
.colL { width: 395px; flex: none; } .colR { margin: 55px 0 0 -24px; }
.card { width: 348px; flex: none; background: #fff; border: 1px solid #ececec; box-shadow: 0 0 5px rgba(0,0,0,.13); padding: 9px 10px 0; position: relative; z-index: 2; }
.card::after { content: ""; position: absolute; top: 7px; width: 15px; height: 15px; background: #fff; border: 1px solid #eaeaea; transform: rotate(45deg); }
.card.l::after { right: -9px; border-left: 0; border-bottom: 0; }
.card.r::after { left: -9px; border-right: 0; border-top: 0; }
.card h3 { font-size: 16px; line-height: 20px; letter-spacing: .78px; color: #479fe3; font-weight: 700; white-space: nowrap; }
.third h3 { letter-spacing: 1.040px; }
.card p { font-size: 13px; line-height: 24px; letter-spacing: .31px; padding: 16px 0 15px; white-space: nowrap; }
.foot { border-top: 1px solid #eee; height: 38px; display: flex; align-items: center; font-size: 13.500px; letter-spacing: -.1px; color: #aaa; padding-bottom: 1px; }
.foot span { flex: 1; } .foot b { color: #88b664; }
.foot svg { color: #d0d0d0; width: 16px; height: 15px; margin-right: 18px; }
.foot svg:last-child { margin-right: 1px; width: 14px; }
.dot { width: 40px; height: 40px; border: 3px solid; border-radius: 50%; background: #fff; display: flex; align-items: center; justify-content: center; z-index: 1; position: relative; }
.dot svg { width: 15px; height: 15px; margin-top: -2px; }
.blue { color: #929eec; } .orange { color: #e5b07c; } .pink { color: #ee85ab; }

.aside { width: 441px; background: #f5f5f5; padding-left: 25px; }
.stats { width: 372px; height: 109px; background: #fff; border: 1px solid #e7e7e7; border-top: 4px solid #f1e947; padding: 6px 6px 0; box-shadow: inset 0 -2px 0 #fff, inset 0 -3px 0 #e7e7e7, 0 2px 0 #fff, 0 3px 0 #e7e7e7; }
.stats h4 { height: 23px; border-bottom: 1px solid #eaeaea; font-size: 14px; line-height: 17px; }
.nums { display: grid; grid-template-columns: 118px 118px 120px; margin-top: 10px; text-align: center; }
.nums div { height: 48px; border-right: 1px solid #eaeaea; }
.nums div:last-child { border: 0; }
.nums em, .nums b { display: block; }
.nums em { font-size: 24px; line-height: 27px; font-weight: 400; letter-spacing: .4px; }
.nums b { font-size: 13.500px; line-height: 23px; letter-spacing: .1px; }
.acthead { width: 380px; height: 69px; margin-top: 1px; border-bottom: 1px solid #dedede; background: #f4f6f8; display: flex; align-items: center; padding-top: 22px; margin-bottom: 15px; }
.acthead h2 { flex: 1; font-size: 16px; padding-left: 4px; letter-spacing: -.15px; line-height: 21px; }
.acthead span { display: flex; gap: 4px; align-items: center; color: #333; font-weight: 900; font-size: 14px; letter-spacing: .4px; }
.ac { width: 15px; height: 15px; } .bc { width: 17px; height: 17px; }
.acts { height: 330px; overflow: hidden; display: flex; flex-direction: column; gap: 10px; width: 380px; }
.act { flex: none; background: #fff; border: 1px solid #e7e7e7; border-left: 3px solid #88b664; padding: 17px 15px 0; position: relative; }
.a1 { height: 114px; } .a2 { height: 156px; } .a3 { height: 120px; }
.act::before { content: ""; position: absolute; left: 0; top: calc(50% - 1px); border: 5px solid transparent; border-left: 4px solid #88b664; border-right: 0; }
.ah { display: flex; height: 22px; }
.ah h5 { flex: 1; font-size: 14px; line-height: 22px; letter-spacing: .03px; }
.ah svg { width: 12px; height: 12px; margin-right: 12px; }
.ah svg:last-child { margin-right: 10px; width: 11px; }
.act p { font-size: 12px; line-height: 20.500px; letter-spacing: -.11px; color: #444; margin-top: 8px; white-space: nowrap; }
.af { display: flex; align-items: center; height: 20px; margin-top: 11px; }
.af svg { width: 13px; height: 13px; color: #b5b5b5; }
.af small { flex: 1; padding-left: 7px; font-size: 12px; color: #b5b5b5; letter-spacing: -.85px; }
.af i { width: 15px; height: 14px; border: 1px solid #aaa; margin: -4px 9px 0 0; }
.af span { font-size: 14px; line-height: 16px; margin-top: -3px; }

.scroll { width: 17px; background: #f0f0f0; border-left: 1px solid #fff; display: flex; flex-direction: column; align-items: center; padding-top: 6px; }
.scroll svg { width: 8px; height: 6px; }
.thumb { width: 15px; height: 171px; background: #a6a6a6; margin-top: 123px; }
.sd { margin-top: 267px; }

/* notification balloon floating over the browser */
.balloon { position: absolute; left: 879px; top: 30px; width: 270px; height: 80px; }
.shape { width: 270px; height: 80px; filter: drop-shadow(3px 3px 1px rgba(0,0,0,.4)); }
.btxt { position: absolute; inset: 29px 0 0 12px; display: grid; grid-template-columns: 21px 189px 18px 25px; align-content: start; align-items: center; white-space: nowrap; }
.btxt .i16 { color: #7fb0bd; }
.btxt strong { font-weight: 400; font-size: 15.500px; line-height: 19px; color: #45618e; letter-spacing: -.4px; }
.wr { width: 11px; height: 11px; margin-top: -8px; } .bx { width: 9px; height: 9px; margin-top: -8px; margin-left: 1px; }
.btxt span { grid-column: 2 / -1; color: #41444a; line-height: 18px; letter-spacing: -.43px; }
```
